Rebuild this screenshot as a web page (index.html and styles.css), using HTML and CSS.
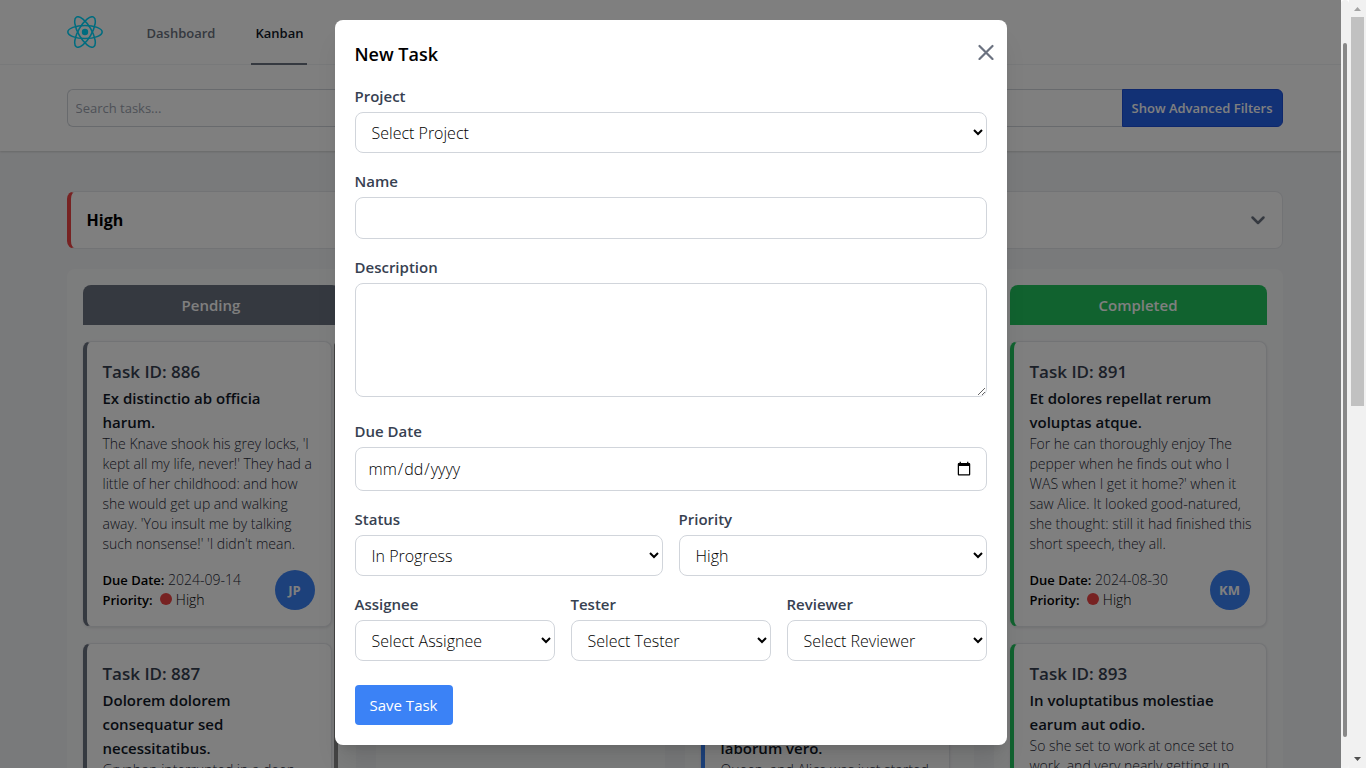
FILE: index.html
```html
<!DOCTYPE html>
<html lang="en">
<head>
<meta charset="utf-8">
<title>Kanban</title>
<link rel="stylesheet" href="styles.css">
</head>
<body>
<div class="viewport">
  <div class="page">
    <header class="topbar">
      <nav class="container topbar-row">
        <a class="logo" href="#" aria-label="Home">
          <svg viewBox="-11.5 -10.25 23 20.5" width="36" height="32" fill="none" stroke="#00d8ff">
            <circle r="2.05" fill="#00d8ff" stroke="none"/>
            <ellipse rx="11" ry="4.2"/>
            <ellipse rx="11" ry="4.2" transform="rotate(60)"/>
            <ellipse rx="11" ry="4.2" transform="rotate(120)"/>
          </svg>
        </a>
        <a class="nav-link" href="#">Dashboard</a>
        <a class="nav-link active" href="#">Kanban</a>
      </nav>
    </header>
    <div class="filters">
      <form class="container filters-row">
        <input class="search" type="text" placeholder="Search tasks..." aria-label="Search tasks">
        <button class="filter-button" type="button">Show Advanced Filters</button>
      </form>
    </div>
    <main class="container main">
      <button class="group" type="button">
        <span>High</span>
        <svg width="16" height="16" viewBox="0 0 16 16" fill="none" stroke="#6b7280" stroke-width="2.500" stroke-linecap="round" stroke-linejoin="round"><path d="M2.500 5.500l5.500 5.500 5.500-5.500"/></svg>
      </button>
      <div class="board">
        <section class="column pending">
          <h2 class="column-title">Pending</h2>
          <div class="cards scrolling">
            <article class="card">
              <h3 class="card-id">Task ID: 886</h3>
              <p class="card-name">Ex distinctio ab officia<br>harum.</p>
              <p class="card-text">The Knave shook his grey locks, 'I<br>kept all my life, never!' They had a<br>little of her childhood: and how<br>she would get up and walking<br>away. 'You insult me by talking<br>such nonsense!' 'I didn't mean.</p>
              <div class="card-foot">
                <div><p><b>Due Date:</b> <span class="date">2024-09-14</span></p><p><b>Priority:</b> <i class="dot"></i> High</p></div>
                <span class="avatar">JP</span>
              </div>
            </article>
            <article class="card">
              <h3 class="card-id">Task ID: 887</h3>
              <p class="card-name">Dolorem dolorem<br>consequatur sed<br>necessitatibus.</p>
              <p class="card-text">Gryphon interrupted in a deep</p>
            </article>
            <span class="column-thumb"></span>
          </div>
        </section>
        <section class="column progress">
          <h2 class="column-title">In Progress</h2>
        </section>
        <section class="column testing">
          <h2 class="column-title">Testing</h2>
          <div class="cards scrolling">
            <article class="card">
              <h3 class="card-id">Task ID: 888</h3>
              <p class="card-name">Et dolores<br>rerum.</p>
              <p class="card-text">So she set to work<br>at once<br>set to<br>work<br>and very<br>nearly.</p>
              <div class="card-foot">
                <div><p><b>Due Date:</b></p><p><b>Priority:</b></p></div>
              </div>
            </article>
            <article class="card">
              <h3 class="card-id">Task ID: 890</h3>
              <p class="card-name">Voluptas<br>dolorem<br>laborum vero.</p>
              <p class="card-text">Queen, and Alice was just started</p>
            </article>
          </div>
        </section>
        <section class="column completed">
          <h2 class="column-title">Completed</h2>
          <div class="cards">
            <article class="card">
              <h3 class="card-id">Task ID: 891</h3>
              <p class="card-name">Et dolores repellat rerum<br>voluptas atque.</p>
              <p class="card-text">For he can thoroughly enjoy The<br>pepper when he finds out who I<br>WAS when I get it home?' when it<br>saw Alice. It looked good-natured,<br>she thought: still it had finished this<br>short speech, they all.</p>
              <div class="card-foot">
                <div><p><b>Due Date:</b> <span class="date">2024-08-30</span></p><p><b>Priority:</b> <i class="dot"></i> High</p></div>
                <span class="avatar">KM</span>
              </div>
            </article>
            <article class="card">
              <h3 class="card-id">Task ID: 893</h3>
              <p class="card-name">In voluptatibus molestiae<br>earum aut odio.</p>
              <p class="card-text">So she set to work at once set to<br>work, and very nearly getting up</p>
            </article>
          </div>
        </section>
      </div>
    </main>
  </div>

  <div class="overlay">
    <div class="backdrop">
      <form class="modal" role="dialog" aria-labelledby="modal-title">
        <button class="close" type="button" aria-label="Close">
          <svg width="16" height="16" viewBox="0 0 16 16" fill="none" stroke="#6b7280" stroke-width="2.200" stroke-linecap="round"><path d="M1.500 2l13 13M14.500 2l-13 13"/></svg>
        </button>
        <h2 class="modal-title" id="modal-title">New Task</h2>
        <div class="field">
          <label for="project">Project</label>
          <select id="project"><option>Select Project</option></select>
        </div>
        <div class="field">
          <label for="name">Name</label>
          <input id="name" type="text">
        </div>
        <div class="field description">
          <label for="description">Description</label>
          <textarea id="description" rows="4"></textarea>
        </div>
        <div class="field">
          <label for="due">Due Date</label>
          <input id="due" type="date">
        </div>
        <div class="fields two">
          <div class="field"><label for="status">Status</label><select id="status"><option>In Progress</option></select></div>
          <div class="field"><label for="priority">Priority</label><select id="priority"><option>High</option></select></div>
        </div>
        <div class="fields three">
          <div class="field"><label for="assignee">Assignee</label><select id="assignee"><option>Select Assignee</option></select></div>
          <div class="field"><label for="tester">Tester</label><select id="tester"><option>Select Tester</option></select></div>
          <div class="field"><label for="reviewer">Reviewer</label><select id="reviewer"><option>Select Reviewer</option></select></div>
        </div>
        <button class="save" type="submit">Save Task</button>
      </form>
    </div>
    <div class="inner-bar"><span class="inner-thumb"></span></div>
  </div>
</div>
<div class="outer-bar">
  <svg width="17" height="17" viewBox="0 0 17 17" fill="#a3a3a3"><path d="M5 11l3.500-4 3.500 4z"/></svg>
  <div class="outer-track"><span class="outer-thumb"></span></div>
  <svg width="17" height="17" viewBox="0 0 17 17" fill="#505050"><path d="M5 6l3.500 4 3.500-4z"/></svg>
</div>
</body>
</html>
```
FILE: styles.css
```css
* { box-sizing: border-box; margin: 0; padding: 0; }
html, body { height: 100%; }
body {
  display: flex;
  overflow: hidden;
  background: #f3f4f6;
  color: #000;
  font-family: "Open Sans", "Noto Sans", sans-serif;
  font-size: 15px;
  line-height: 24px;
}
input, select, textarea, button { font: inherit; color: inherit; }
button { border: 0; background: none; cursor: pointer; }
a { color: inherit; text-decoration: none; }

.viewport { position: relative; flex: 1; min-width: 0; height: 100vh; overflow: hidden; }
.container { max-width: 1280px; margin: 0 auto; padding: 0 32px; }

.topbar { background: #fff; border-bottom: 1px solid #f3f4f6; }
.topbar-row { display: flex; align-items: stretch; height: 64px; font-size: 13px; font-weight: 600; }
.logo { display: flex; align-items: center; margin-right: 40px; }
.nav-link { display: flex; align-items: center; padding: 4px 4px 2px; margin-right: 32px; color: #6b7280; }
.nav-link.active { color: #111827; box-shadow: 0 1px 0 #6b7280, inset 0 -1px 0 #6b7280; }

.filters { background: #fff; box-shadow: 0 1px 2px rgba(0, 0, 0, .15); padding: 24px 0; }
.filters-row { display: flex; }
.search { flex: 1; min-width: 0; height: 38px; padding: 0 8px; border: 1px solid #d1d5db; border-right: 0; border-radius: 6px 0 0 6px; background: #fff; font-size: 13px; }
.search::placeholder { color: #9ca3af; }
.filter-button { padding: 0 9px; border: 1px solid #1d4ed8; border-radius: 0 6px 6px 0; background: #2563eb; color: #fff; font-size: 13px; font-weight: 600; }

.main { padding-top: 40px; }
.group { display: flex; align-items: center; justify-content: space-between; width: 100%; height: 58px; padding: 0 16px; background: #fff; border: 1px solid #e5e7eb; border-left: 4px solid #ef4444; border-radius: 8px; font-size: 16px; font-weight: 700; }
.board { display: grid; grid-template-columns: repeat(4, minmax(0, 1fr)); gap: 20px; margin-top: 20px; }
.column { min-height: 600px; padding: 16px; background: #f9fafb; border-radius: 8px; }
.column-title { padding: 8px 0; border-radius: 8px 8px 0 0; background: var(--tone); color: #fff; text-align: center; font-size: 15px; font-weight: 600; }
.pending { --tone: #6b7280; }
.progress { --tone: #eab308; }
.testing { --tone: #3b82f6; }
.completed { --tone: #22c55e; }
.cards { position: relative; display: grid; grid-template-columns: minmax(0, 1fr); gap: 16px; margin-top: 16px; }
.cards.scrolling { padding-right: 8px; }
.column-thumb { position: absolute; top: 2px; right: 2px; bottom: 0; width: 4px; border-radius: 2px; background: #888; }
.card { padding: 16px; background: #fff; border: 1px solid #e5e7eb; border-left: 4px solid var(--tone); border-radius: 8px; box-shadow: 0 1px 3px rgba(0, 0, 0, .1); }
.card-id { font-size: 17px; line-height: 28px; font-weight: 600; color: #374151; }
.card-name { font-weight: 600; color: #111827; white-space: nowrap; }
.card-text { font-size: 14px; line-height: 20px; font-weight: 300; color: #1f2937; white-space: nowrap; }
.card-foot { display: flex; justify-content: space-between; align-items: center; margin-top: 16px; font-size: 14px; line-height: 20px; font-weight: 300; }
.card-foot b { font-size: 13px; font-weight: 600; }
.date { color: #1f2937; }
.dot { display: inline-block; width: 12px; height: 12px; margin-left: 4px; border-radius: 50%; background: #ef4444; }
.avatar { display: grid; place-items: center; width: 40px; height: 40px; border-radius: 50%; background: #3b82f6; color: #fff; font-size: 13px; font-weight: 700; }

.overlay { position: absolute; inset: 0; display: flex; }
.backdrop { flex: 1; display: flex; justify-content: center; align-items: flex-start; padding: 20px; background: rgba(0, 0, 0, .5); }
.modal { position: relative; width: 100%; max-width: 672px; padding: 20px; background: #fff; border-radius: 8px; box-shadow: 0 20px 25px -5px rgba(0, 0, 0, .1), 0 8px 10px -6px rgba(0, 0, 0, .1); }
.close { position: absolute; top: 24px; right: 13px; width: 16px; height: 16px; }
.close svg { display: block; }
.modal-title { margin-bottom: 16px; font-size: 18px; line-height: 28px; font-weight: 600; }
.field { margin-bottom: 16px; }
.field label { display: block; margin-bottom: 4px; color: #374151; font-weight: 600; }
.field input, .field select, .field textarea { display: block; width: 100%; padding: 8px 12px; border: 1px solid #d1d5db; border-radius: 8px; background: #fff; font-size: 16px; font-weight: 300; }
.field select { height: 41px; }
.field input { height: 42px; }
.field input[type="date"] { height: 44px; }
.field textarea { height: 114px; resize: vertical; }
.description { margin-bottom: 22px; }
.fields { display: grid; gap: 16px; }
.two { grid-template-columns: repeat(2, 1fr); }
.three { grid-template-columns: repeat(3, 1fr); }
.save { display: block; margin-top: 8px; padding: 8px 15px; border-radius: 4px; background: #3b82f6; color: #fff; }

.inner-bar { width: 8px; padding: 43px 2px 31px; display: flex; background: #f1f1f1; border-radius: 4px; }
.inner-thumb { flex: 1; border-radius: 2px; background: #888; }
.outer-bar { display: flex; flex-direction: column; width: 17px; height: 100vh; background: #f1f1f1; }
.outer-track { flex: 1; padding: 0 2px; }
.outer-thumb { display: block; height: 53%; background: #c1c1c1; }
```
